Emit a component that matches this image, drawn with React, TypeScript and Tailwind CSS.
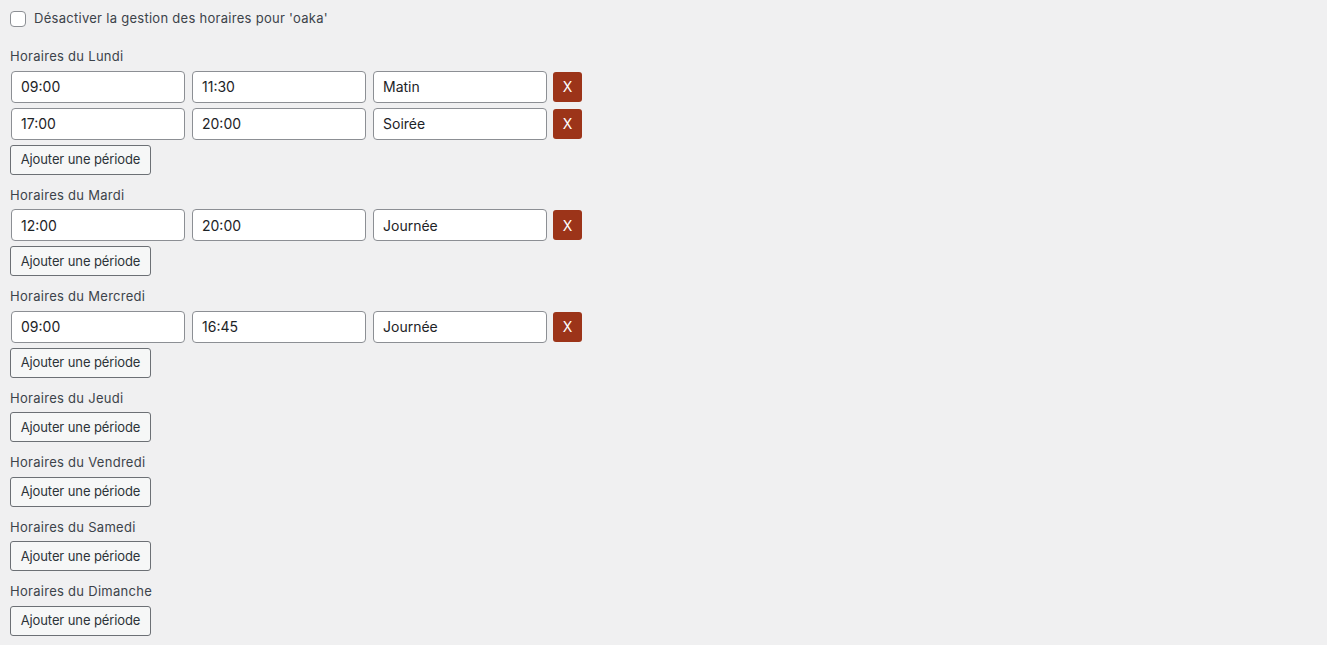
import { useState } from "react";

type Period = { start: string; end: string; label: string };

const initialDays: { name: string; periods: Period[] }[] = [
  {
    name: "Lundi",
    periods: [
      { start: "09:00", end: "11:30", label: "Matin" },
      { start: "17:00", end: "20:00", label: "Soirée" },
    ],
  },
  { name: "Mardi", periods: [{ start: "12:00", end: "20:00", label: "Journée" }] },
  { name: "Mercredi", periods: [{ start: "09:00", end: "16:45", label: "Journée" }] },
  { name: "Jeudi", periods: [] },
  { name: "Vendredi", periods: [] },
  { name: "Samedi", periods: [] },
  { name: "Dimanche", periods: [] },
];

const inputCls =
  "h-8 w-[174px] rounded-[4px] border border-[#8c8f94] bg-white px-[9px] text-[14px] text-[#1d2327] outline-none focus:border-[#2271b1]";

export default function App() {
  const [days, setDays] = useState(initialDays);
  const [disabled, setDisabled] = useState(false);

  const addPeriod = (d: number) =>
    setDays((prev) =>
      prev.map((day, i) => (i === d ? { ...day, periods: [...day.periods, { start: "", end: "", label: "" }] } : day))
    );

  const removePeriod = (d: number, p: number) =>
    setDays((prev) =>
      prev.map((day, i) => (i === d ? { ...day, periods: day.periods.filter((_, j) => j !== p) } : day))
    );

  const update = (d: number, p: number, key: keyof Period, value: string) =>
    setDays((prev) =>
      prev.map((day, i) =>
        i === d
          ? { ...day, periods: day.periods.map((per, j) => (j === p ? { ...per, [key]: value } : per)) }
          : day
      )
    );

  return (
    <div className="min-h-[645px] bg-[#f0f0f1] px-[10px] pt-[9px] font-[Inter,'Liberation_Sans',Arial,sans-serif] text-[13px] text-[#3c434a]">
      <label className="flex h-5 items-center gap-2">
        <input
          type="checkbox"
          checked={disabled}
          onChange={(e) => setDisabled(e.target.checked)}
          className="h-4 w-4 appearance-none rounded-[4px] border border-[#8c8f94] bg-white checked:bg-[#2271b1]"
        />
        <span className="tracking-[0.28px]">Désactiver la gestion des horaires pour 'oaka'</span>
      </label>

      <div className="mt-[17px] flex flex-col gap-[10px]">
        {days.map((day, d) => (
          <div key={day.name} className="flex flex-col gap-[5px]">
            <p className="h-[19.5px] pt-px leading-[18.5px] tracking-[0.28px]">Horaires du {day.name}</p>
            {day.periods.map((per, p) => (
              <div key={p} className="flex items-center gap-[7px] pl-px">
                <input className={inputCls} value={per.start} onChange={(e) => update(d, p, "start", e.target.value)} />
                <input className={inputCls} value={per.end} onChange={(e) => update(d, p, "end", e.target.value)} />
                <input className={inputCls} value={per.label} onChange={(e) => update(d, p, "label", e.target.value)} />
                <button
                  onClick={() => removePeriod(d, p)}
                  className="-ml-px h-[30px] w-[29px] rounded-[3px] bg-[#9c3419] text-[14px] text-white"
                >
                  X
                </button>
              </div>
            ))}
            <div>
              <button
                onClick={() => addPeriod(d)}
                className="h-[30px] w-[141px] rounded-[3px] border border-[#6c7075] bg-[#f6f7f7] pt-px text-[13px] tracking-[-0.1px] text-[#2c3338]"
              >
                Ajouter une période
              </button>
            </div>
          </div>
        ))}
      </div>
    </div>
  );
}
